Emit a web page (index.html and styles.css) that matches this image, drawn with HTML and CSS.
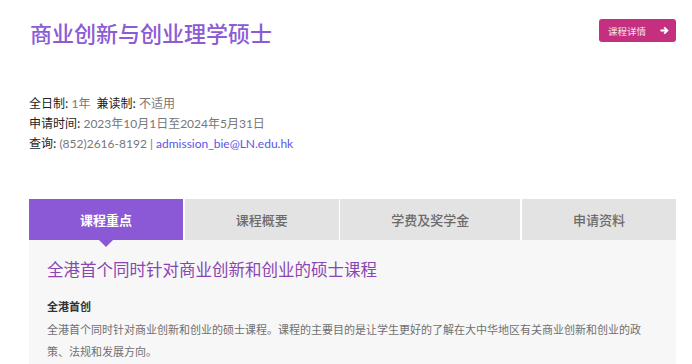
FILE: index.html
```html
<!DOCTYPE html>
<html lang="zh">
<head>
<meta charset="utf-8">
<title>商业创新与创业理学硕士</title>
<link rel="stylesheet" href="styles.css">
</head>
<body>
<div class="page">
  <header class="head">
    <h1 class="title">商业创新与创业理学硕士</h1>
    <a class="btn" href="#">课程详情
      <svg class="arrow" width="9" height="9" viewBox="0 0 9 9"><path d="M0.5 4.5H7M4.2 1.4L7.3 4.5L4.2 7.6" fill="none" stroke="#fff" stroke-width="2"/></svg>
    </a>
  </header>
  <div class="info">
    <p><b>全日制:</b> 1年&nbsp; <b>兼读制:</b> 不适用</p>
    <p><b>申请时间:</b> 2023年10月1日至2024年5月31日</p>
    <p><b>查询:</b> (852)2616-8192 | <a class="link" href="#">admission_bie@LN.edu.hk</a></p>
  </div>
  <nav class="tabs">
    <div class="tab active">课程重点</div>
    <div class="tab">课程概要</div>
    <div class="tab">学费及奖学金</div>
    <div class="tab">申请资料</div>
  </nav>
  <section class="panel">
    <h2 class="panel-title">全港首个同时针对商业创新和创业的硕士课程</h2>
    <h3 class="sub">全港首创</h3>
    <p class="text">全港首个同时针对商业创新和创业的硕士课程。课程的主要目的是让学生更好的了解在大中华地区有关商业创新和创业的政策、法规和发展方向。</p>
  </section>
</div>
</body>
</html>
```
FILE: styles.css
```css
* { box-sizing: border-box; }
html, body { margin: 0; padding: 0; background: #fff; }
body { font-family: Lato, "Noto Sans CJK SC", sans-serif; }
.page { width: 647px; margin-left: 29px; }
.head { display: flex; justify-content: space-between; align-items: flex-start; padding-top: 17px; }
.title { margin: 0; font-family: "Noto Sans CJK SC", sans-serif; font-size: 22px; font-weight: 500; line-height: 30px; color: #8c5bd6; padding-left: 1px; }
.btn { margin-top: 2px; display: flex; align-items: center; gap: 14px; height: 23px; width: 77px; padding-left: 9px; background: #c4307f; color: #f6e3ee; font-family: "Noto Sans CJK SC", sans-serif; font-size: 9.5px; text-decoration: none; border-radius: 3px; }
.arrow { display: block; }
.info { margin-top: 46px; font-size: 12px; line-height: 19px; color: #777; }
.info p { margin: 0; }
.info b { color: #222; font-weight: 400; font-family: "Noto Sans CJK SC", Lato, sans-serif; }
.link { color: #5b55e6; text-decoration: none; }
.tabs { margin-top: 46px; display: flex; gap: 1.5px; height: 41px; }
.tab { flex: 1 1 auto; display: flex; align-items: center; justify-content: center; background: #e3e3e3; color: #6b6b6b; font-family: "Noto Sans CJK SC", sans-serif; font-size: 13px; font-weight: 500; padding: 0 50px; }
.tab.active { position: relative; background: #8b58d6; color: #fff; font-weight: 700; }
.tab.active::after { content: ""; position: absolute; left: 50%; top: 100%; margin-left: -7px; border-left: 7px solid transparent; border-right: 7px solid transparent; border-top: 7px solid #8b58d6; }
.panel { background: #f7f7f7; padding: 17px 30px 20px 18px; font-family: "Noto Sans CJK SC", sans-serif; }
.panel-title { margin: 0; font-size: 16.5px; font-weight: 400; line-height: 24px; color: #8a45b2; }
.sub { margin: 16px 0 0; font-size: 11px; font-weight: 700; line-height: 18px; color: #333; }
.text { margin: 3px 0 0; font-family: "Noto Sans CJK TC", "Noto Sans CJK SC", sans-serif; font-size: 11px; line-height: 22px; color: #707070; }
```
